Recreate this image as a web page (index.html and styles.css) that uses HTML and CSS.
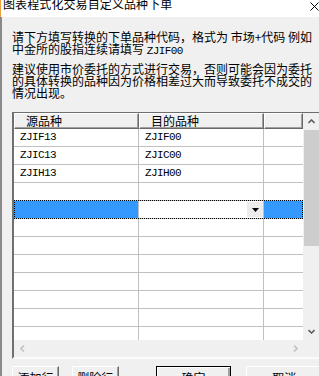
FILE: index.html
```html
<!DOCTYPE html>
<html>
<head>
  <meta charset="UTF-8">
  <title>图表程式化交易自定义品种下单</title>
  <link rel="stylesheet" href="styles.css">
</head>
<body>
  <div class="window">
    <div class="titlebar">
      <span class="title">图表程式化交易自定义品种下单</span>
      <svg class="close" width="9" height="9" viewBox="0 0 9 9">
        <path d="M0.5 0.5 L8.5 8.5 M8.5 0.5 L0.5 8.5" stroke="#000" stroke-width="1" fill="none"/>
      </svg>
    </div>
    <div class="client">
      <p class="hint">请下方填写转换的下单品种代码，格式为 市场+代码 例如<br>中金所的股指连续请填写 <span class="code">ZJIF00</span></p>
      <p class="hint second">建议使用市价委托的方式进行交易，否则可能会因为委托<br>的具体转换的品种因为价格相差过大而导致委托不成交的<br>情况出现。</p>

      <div class="grid">
        <div class="grid-view">
          <div class="head">
            <div class="hcell">源品种</div>
            <div class="hcell">目的品种</div>
            <div class="hcell"></div>
          </div>
          <div class="rows">
            <div class="row"><div class="cell code">ZJIF13</div><div class="cell code">ZJIF00</div><div class="cell last"></div></div>
            <div class="row"><div class="cell code">ZJIC13</div><div class="cell code">ZJIC00</div><div class="cell last"></div></div>
            <div class="row"><div class="cell code">ZJIH13</div><div class="cell code">ZJIH00</div><div class="cell last"></div></div>
            <div class="row"><div class="cell"></div><div class="cell"></div><div class="cell last"></div></div>
            <div class="row selected">
              <div class="cell picked"></div>
              <div class="cell combo">
                <span class="drop">
                  <svg width="7" height="4" viewBox="0 0 7 4"><path d="M0 0 H7 L3.5 4 Z" fill="#000"/></svg>
                </span>
              </div>
              <div class="cell last picked"></div>
            </div>
            <div class="row"><div class="cell"></div><div class="cell"></div><div class="cell last"></div></div>
            <div class="row"><div class="cell"></div><div class="cell"></div><div class="cell last"></div></div>
            <div class="row"><div class="cell"></div><div class="cell"></div><div class="cell last"></div></div>
            <div class="row"><div class="cell"></div><div class="cell"></div><div class="cell last"></div></div>
            <div class="row"><div class="cell"></div><div class="cell"></div><div class="cell last"></div></div>
            <div class="row"><div class="cell"></div><div class="cell"></div><div class="cell last"></div></div>
            <div class="row"><div class="cell"></div><div class="cell"></div><div class="cell last"></div></div>
          </div>
          <div class="hscroll">
            <svg width="5" height="7" viewBox="0 0 5 7"><path d="M4 0.5 L1 3.5 L4 6.5" stroke="#c2c2c2" stroke-width="1.6" fill="none"/></svg>
            <svg width="5" height="7" viewBox="0 0 5 7"><path d="M1 0.5 L4 3.5 L1 6.5" stroke="#c2c2c2" stroke-width="1.6" fill="none"/></svg>
          </div>
        </div>
        <div class="vscroll">
          <div class="sb-btn">
            <svg width="7" height="5" viewBox="0 0 7 5"><path d="M0.5 4 L3.5 1 L6.5 4" stroke="#606060" stroke-width="1.6" fill="none"/></svg>
          </div>
          <div class="thumb"></div>
          <div class="track"></div>
          <div class="sb-btn">
            <svg width="7" height="5" viewBox="0 0 7 5"><path d="M0.5 1 L3.5 4 L6.5 1" stroke="#606060" stroke-width="1.6" fill="none"/></svg>
          </div>
          <div class="corner"></div>
        </div>
      </div>

      <div class="buttons">
        <button class="btn small">添加行</button>
        <button class="btn small">删除行</button>
        <button class="btn wide default">确定</button>
        <button class="btn wide">取消</button>
      </div>
    </div>
  </div>
</body>
</html>
```

FILE: styles.css
```css
body {
  margin: 0;
  width: 319px;
  height: 376px;
  overflow: hidden;
  background-color: #f0f0f0;
  font-family: "Noto Sans CJK SC", "Liberation Sans", sans-serif;
  font-size: 12px;
  color: #000;
}

.window {
  width: 322px;
}

.titlebar {
  height: 17px;
  background-color: #fff;
  border-left: 1px solid #e9a23b;
  display: flex;
  justify-content: space-between;
  overflow: hidden;
}

.title {
  margin-top: -3px;
  margin-left: 2px;
  line-height: 14px;
  font-size: 12px;
  letter-spacing: 0.1px;
}

.close {
  margin-top: 2px;
  margin-right: 3px;
}

.client {
  border-left: 2px solid #8a8a8a;
  padding: 14px 0 0 10px;
}

.hint {
  margin: 0;
  line-height: 12px;
  white-space: nowrap;
}

.hint.second {
  margin-top: 6px;
}

.code {
  font-family: "Liberation Mono", monospace;
  font-size: 11px;
  letter-spacing: -0.6px;
}

/* data grid */
.grid {
  margin-top: 13px;
  display: flex;
  width: 308px;
  border-top: 1px solid #6e6e6e;
  border-left: 2px solid #707070;
  border-bottom: 2px solid #fbfbfb;
}

.grid-view {
  width: 289px;
  background-color: #fff;
}

.head {
  display: grid;
  grid-template-columns: 125px 125px 39px;
}

.hcell {
  box-sizing: border-box;
  height: 16px;
  line-height: 14px;
  padding-left: 11px;
  background-color: #f0f0f0;
  border: 1px solid;
  border-color: #fff #696969 #696969 #fff;
  box-shadow: inset -1px -1px 0 #a0a0a0;
}

.rows {
  height: 211px;
  overflow: hidden;
}

.row {
  display: grid;
  grid-template-columns: 125px 125px 39px;
}

.cell {
  box-sizing: border-box;
  height: 18px;
  line-height: 17px;
  padding-left: 6px;
  border-right: 1px solid #c0c0c0;
  border-bottom: 1px solid #c0c0c0;
}

.cell.last {
  border-right: none;
}

.row.selected {
  outline: 1px dotted #000;
  outline-offset: -1px;
  position: relative;
  top: -1px;
  margin-bottom: -1px;
  border-top: 1px solid #c0c0c0;
}

.cell.picked {
  background-color: #3399ff;
}

.cell.combo {
  display: flex;
  justify-content: flex-end;
  padding: 1px 0 1px 0;
}

.drop {
  width: 16px;
  background-color: #ececec;
  display: flex;
  align-items: center;
  justify-content: center;
}

.hscroll {
  height: 17px;
  background-color: #f0f0f0;
  display: flex;
  align-items: center;
  justify-content: space-between;
  padding: 0 5px 0 6px;
}

.vscroll {
  width: 17px;
  display: flex;
  flex-direction: column;
  background-color: #f0f0f0;
}

.sb-btn {
  height: 17px;
  display: flex;
  align-items: center;
  justify-content: center;
}

.thumb {
  height: 116px;
  margin-left: 1px;
  width: 15px;
  background-color: #cdcdcd;
}

.track {
  flex: 1;
}

.corner {
  height: 17px;
}

/* bottom buttons */
.buttons {
  margin-top: 7px;
  display: flex;
}

.btn {
  box-sizing: border-box;
  height: 23px;
  padding: 0;
  font-family: "Noto Sans CJK SC", "Liberation Sans", sans-serif;
  font-size: 12px;
  line-height: 14px;
  color: #000;
  background-color: #f0f0f0;
  border: 1px solid;
  border-color: #fff #696969 #696969 #fff;
  box-shadow: inset -1px -1px 0 #a0a0a0;
}

.btn.small {
  width: 47px;
  margin-right: 13px;
}

.btn.wide {
  width: 76px;
  margin-left: 2px;
}

.btn.default {
  margin-left: 24px;
  margin-right: 13px;
  border-color: #000;
  box-shadow: inset 1px 1px 0 #fff, inset -2px -2px 0 #a0a0a0;
}
```
